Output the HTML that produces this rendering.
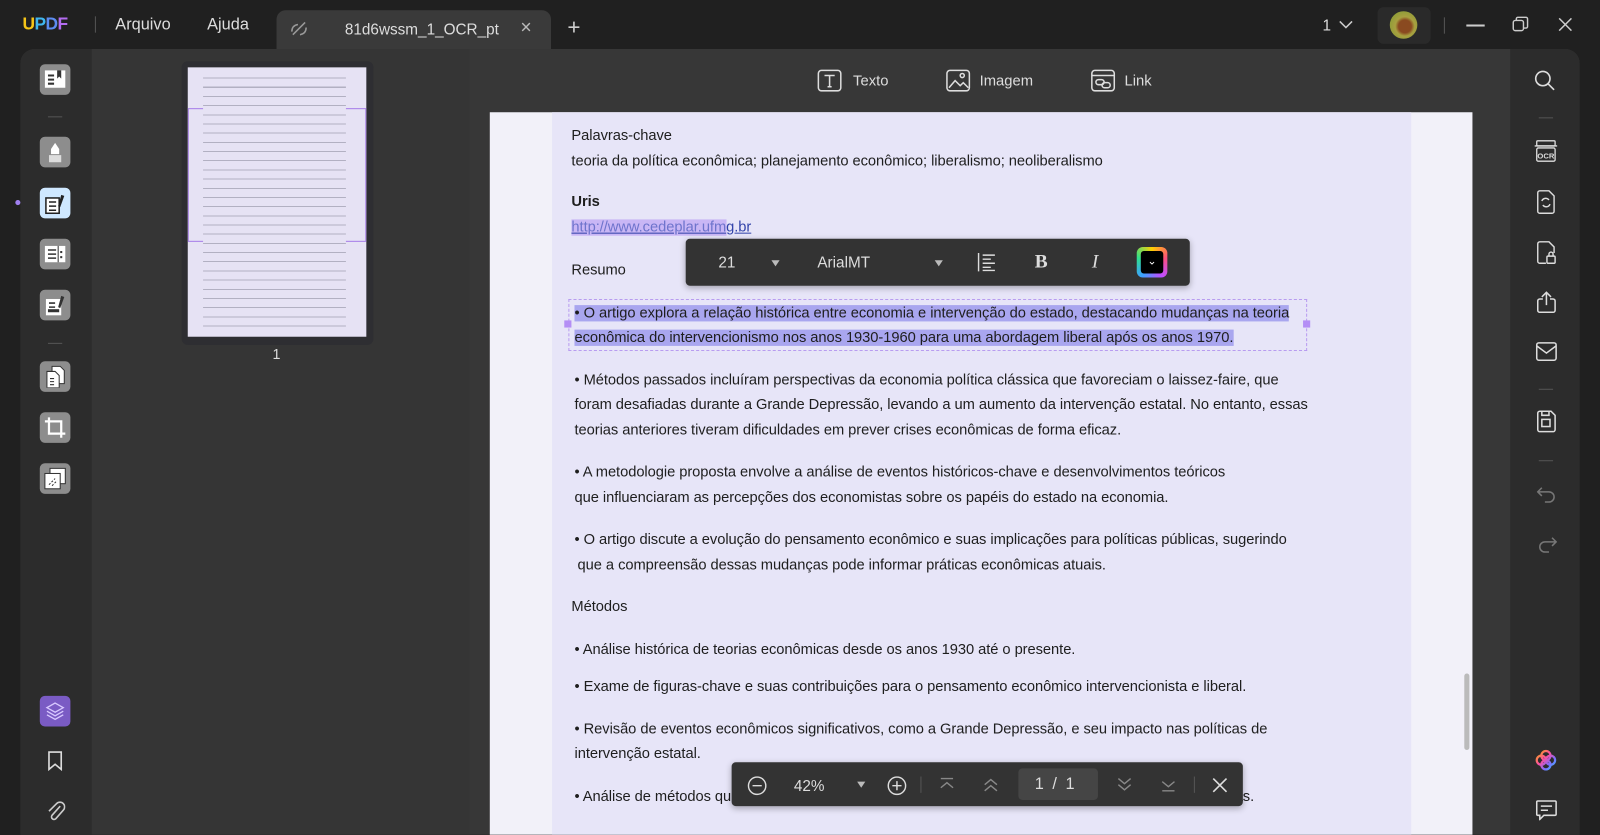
<!DOCTYPE html>
<html><head><meta charset="utf-8">
<style>
*{box-sizing:border-box;margin:0;padding:0}
html,body{width:1600px;height:835px;overflow:hidden;background:#202020;font-family:"Liberation Sans",sans-serif}
#s{position:absolute;left:0;top:0;width:1568px;height:818px;transform:scale(1.020408);transform-origin:0 0;background:#202020}
.a{position:absolute}
.ib{position:absolute;left:39px;width:30px;height:30px;border-radius:5px;background:#8d8d8d}
.ib svg{position:absolute;left:4px;top:4px}
.t{position:absolute;font-size:14.4px;color:#1e1e1e;white-space:nowrap;letter-spacing:-0.05px}
.w{color:#ddd}
.ri{position:absolute;left:1503px}
.sep{position:absolute;width:14px;height:1px;background:#555}
</style></head><body><div id="s">
<div class="a" style="left:22px;top:14px;font-weight:bold;font-size:17px;letter-spacing:-0.5px"><span style="color:#f5c518">U</span><span style="color:#3fb6f0">P</span><span style="color:#5c8cf0">D</span><span style="color:#b36cf0">F</span></div>
<div class="a" style="left:93px;top:16px;width:1px;height:16px;background:#555"></div>
<div class="a w" style="left:113px;top:16px;font-size:16px">Arquivo</div>
<div class="a w" style="left:203px;top:16px;font-size:16px">Ajuda</div>
<div class="a" style="left:271px;top:10px;width:269px;height:38px;background:#3a3a3a;border-radius:9px 9px 0 0"></div>
<svg class="a" style="left:283px;top:20px" width="20" height="18" viewBox="0 0 20 18" fill="none" stroke="#999" stroke-width="1.5"><path d="M4 14 L16 2 M3 11 Q3 5 9 4 M17 7 Q17 13 11 14"/></svg>
<div class="a w" style="left:338px;top:21px;font-size:15px">81d6wssm_1_OCR_pt</div>
<div class="a" style="left:510px;top:17px;font-size:19px;color:#bbb">×</div>
<div class="a" style="left:556px;top:14px;font-size:22px;color:#ccc;font-weight:300">+</div>
<div class="a w" style="left:1296px;top:17px;font-size:15px">1</div>
<svg class="a" style="left:1311px;top:19px" width="16" height="10"><path d="M2 2 L8 8 L14 2" stroke="#ccc" stroke-width="1.5" fill="none"/></svg>
<div class="a" style="left:1350px;top:7px;width:52px;height:36px;background:#2a2a2a;border-radius:6px"></div>
<div class="a" style="left:1362px;top:11px;width:27px;height:27px;border-radius:50%;background:radial-gradient(circle at 55% 55%,#8a4a20 0 30%,#a8a040 45%,#7a9a30 100%)"></div>
<div class="a" style="left:1415px;top:17px;width:1px;height:16px;background:#555"></div>
<div class="a" style="left:1437px;top:24px;width:18px;height:1.5px;background:#ccc"></div>
<svg class="a" style="left:1481px;top:15px" width="18" height="18" fill="none" stroke="#ccc" stroke-width="1.4"><rect x="2" y="5" width="10" height="10" rx="2"/><path d="M5 5V3.5a1.5 1.5 0 0 1 1.5-1.5H14.5A1.5 1.5 0 0 1 16 3.5V11a1.5 1.5 0 0 1-1.5 1.5H12"/></svg>
<svg class="a" style="left:1526px;top:16px" width="16" height="16" stroke="#ccc" stroke-width="1.5"><path d="M2 2L14 14M14 2L2 14"/></svg>
<div class="a" style="left:20px;top:48px;width:1528px;height:770px;background:#373737;border-radius:14px 14px 0 0;overflow:hidden">
 <div class="a" style="left:0;top:0;width:70px;height:770px;background:#2c2c2c"></div>
 <div class="a" style="left:70px;top:0;width:370px;height:770px;background:#353535"></div>
 <div class="a" style="left:1460px;top:0;width:68px;height:770px;background:#2c2c2c"></div>
</div>
<div class="ib" style="top:63px"><svg width="22" height="22" fill="none" stroke="#fff" stroke-width="2"><rect x="1" y="2" width="20" height="17" fill="#fff" stroke="none"/><path d="M4 7h6M4 11h6M4 15h6" stroke="#333"/><path d="M13 2v8l2-2 2 2V2" fill="#333" stroke="none"/></svg></div>
<div class="sep" style="left:47px;top:114px"></div>
<div class="ib" style="top:134px"><svg width="22" height="22"><path d="M11 2 L15 8 V13 H7 V8Z" fill="#fff"/><rect x="5" y="14" width="12" height="7" fill="#ddd"/></svg></div>
<div class="a" style="left:15px;top:196px;width:5px;height:5px;border-radius:50%;background:#a080f0"></div>
<div class="ib" style="top:184px;background:#cfe8ff"><svg width="22" height="22"><rect x="2" y="6" width="13" height="15" fill="#fff" stroke="#222" stroke-width="1.5"/><path d="M5 10h7M5 14h7M5 18h7" stroke="#222" stroke-width="1.5"/><path d="M17 3 L20 4 L16 15 L14 14Z" fill="#222"/></svg></div>
<div class="ib" style="top:234px"><svg width="22" height="22"><rect x="1" y="3" width="20" height="16" fill="#fff"/><path d="M4 7h8M4 11h8M4 15h8" stroke="#333" stroke-width="1.5"/><path d="M14 3v16" stroke="#333"/><rect x="16" y="8" width="2" height="2" fill="#333"/><rect x="16" y="13" width="2" height="2" fill="#333"/></svg></div>
<div class="ib" style="top:284px"><svg width="22" height="22"><rect x="2" y="5" width="15" height="16" fill="#fff"/><path d="M5 9h6M5 13h6" stroke="#333" stroke-width="1.5"/><rect x="4" y="15" width="11" height="3" fill="#333"/><path d="M17 2 L20 3 L16 14 L14 13Z" fill="#333"/></svg></div>
<div class="sep" style="left:47px;top:336px"></div>
<div class="ib" style="top:354px"><svg width="22" height="22"><path d="M8 1h8l4 4v13H8Z" fill="#fff" stroke="#333"/><path d="M3 6h8l4 4v12H3Z" fill="#fff" stroke="#333"/><path d="M6 13h4M6 16h4M6 19h4" stroke="#333"/></svg></div>
<div class="ib" style="top:404px"><svg width="22" height="22" fill="none" stroke="#fff" stroke-width="2.2"><path d="M5 1v16h16M1 5h16v16"/></svg></div>
<div class="ib" style="top:454px"><svg width="22" height="22"><rect x="6" y="1" width="15" height="15" fill="#fff" stroke="#333"/><rect x="1" y="6" width="15" height="15" fill="#fff" stroke="#333"/><path d="M5 17l6-6M8 18l5-5" stroke="#333" stroke-dasharray="2 1.5"/></svg></div>
<div class="ib" style="top:682px;background:#7a5bc4"><svg width="22" height="22" fill="none" stroke="#d8c8ff" stroke-width="1.3"><path d="M11 3 L19 7.5 L11 12 L3 7.5Z M3 11 L11 15.5 L19 11 M3 14.5 L11 19 L19 14.5"/></svg></div>
<svg class="a" style="left:46px;top:736px" width="16" height="20" fill="none" stroke="#ddd" stroke-width="1.6"><path d="M2 1h12v17l-6-5-6 5Z"/></svg>
<svg class="a" style="left:44px;top:784px" width="20" height="22" fill="none" stroke="#ccc" stroke-width="1.6"><path d="M15 6 L7 15 a2.5 2.5 0 0 0 3.5 3.5 L18 10 a4.5 4.5 0 0 0 -6.5 -6.5 L4 11"/></svg>
<div class="a" style="left:178px;top:60px;width:188px;height:278px;background:#2e2e32;border-radius:6px"></div>
<div class="a" style="left:184px;top:66px;width:175px;height:264px;background:#e6e2f4;overflow:hidden">
 <div class="a" style="left:0;top:40px;width:175px;height:131px;border:1px solid #a67ce8"></div>
 <div class="a" style="left:15px;top:6px;width:140px;height:250px;background:repeating-linear-gradient(#e6e2f4 0 4px,#b2b0c2 4px 5px,#e6e2f4 5px 9px)"></div>
</div>
<div class="a w" style="left:267px;top:339px;font-size:14px">1</div>
<svg class="a" style="left:801px;top:68px" width="24" height="22" fill="none" stroke="#ddd" stroke-width="1.5"><rect x="1" y="1" width="22" height="20" rx="3"/><path d="M7 6h10M12 6v11M10 17h4"/></svg>
<div class="a w" style="left:836px;top:72px;font-size:14.5px">Texto</div>
<svg class="a" style="left:927px;top:68px" width="24" height="22" fill="none" stroke="#ddd" stroke-width="1.5"><rect x="1" y="1" width="22" height="20" rx="3"/><path d="M3 18l6-7 5 5 3-3 5 5"/><circle cx="16" cy="6" r="2"/></svg>
<div class="a w" style="left:960px;top:72px;font-size:14.5px">Imagem</div>
<svg class="a" style="left:1069px;top:68px" width="24" height="22" fill="none" stroke="#ddd" stroke-width="1.5"><rect x="1" y="1" width="22" height="20" rx="3"/><path d="M1 6h22"/><rect x="5" y="10" width="8" height="5" rx="2.5"/><rect x="11" y="13" width="8" height="5" rx="2.5"/></svg>
<div class="a w" style="left:1102px;top:72px;font-size:14.5px">Link</div>
<svg class="ri" style="top:68px" width="22" height="22" fill="none" stroke="#ddd" stroke-width="1.6"><circle cx="9" cy="9" r="7"/><path d="M14 14l6 6"/></svg>
<div class="sep" style="left:1508px;top:115px;background:#555"></div>
<svg class="ri" style="top:136px" width="24" height="24" fill="none" stroke="#ddd" stroke-width="1.3"><rect x="3" y="2" width="18" height="5" rx="1"/><path d="M1 7h22"/><rect x="3" y="9" width="18" height="13" rx="1.5"/><text x="12" y="19.5" font-size="7.5" font-family="Liberation Sans" fill="#ddd" stroke="none" text-anchor="middle" font-weight="bold">OCR</text></svg>
<svg class="ri" style="left:1505px;top:186px" width="20" height="24" fill="none" stroke="#ddd" stroke-width="1.4"><path d="M2 3a2 2 0 0 1 2-2h9l5 5v15a2 2 0 0 1-2 2H4a2 2 0 0 1-2-2Z"/><path d="M6 11a4 4 0 0 1 7-1M14 14a4 4 0 0 1-7 1"/></svg>
<svg class="ri" style="left:1505px;top:236px" width="20" height="24" fill="none" stroke="#ddd" stroke-width="1.4"><path d="M10 22H4a2 2 0 0 1-2-2V3a2 2 0 0 1 2-2h9l5 5v6"/><rect x="11" y="15" width="8" height="7" rx="1"/><path d="M13 15v-2a2 2 0 0 1 4 0v2"/></svg>
<svg class="ri" style="left:1505px;top:285px" width="22" height="22" fill="none" stroke="#ddd" stroke-width="1.5"><path d="M7 8H4a2 2 0 0 0-2 2v9a2 2 0 0 0 2 2h13a2 2 0 0 0 2-2v-9a2 2 0 0 0-2-2h-3M10.5 14V2M6 6l4.5-4.5L15 6"/></svg>
<svg class="ri" style="left:1505px;top:335px" width="22" height="20" fill="none" stroke="#ddd" stroke-width="1.5"><rect x="1" y="1" width="19" height="17" rx="2"/><path d="M1 4l9.5 7L20 4"/></svg>
<div class="sep" style="left:1508px;top:381px"></div>
<svg class="ri" style="left:1506px;top:402px" width="20" height="22" fill="none" stroke="#ddd" stroke-width="1.5"><path d="M1 3a2 2 0 0 1 2-2h11l4 4v14a2 2 0 0 1-2 2H3a2 2 0 0 1-2-2Z"/><rect x="5" y="9" width="8" height="7"/><path d="M5 1v4h7V1"/></svg>
<div class="sep" style="left:1508px;top:451px"></div>
<svg class="ri" style="left:1506px;top:475px" width="20" height="18" fill="none" stroke="#777" stroke-width="1.5"><path d="M5 3L1 7l4 4M1 7h11a5 5 0 0 1 0 10H8"/></svg>
<svg class="ri" style="left:1506px;top:524px" width="20" height="18" fill="none" stroke="#777" stroke-width="1.5"><path d="M15 3l4 4-4 4M19 7H8a5 5 0 0 0 0 10h4"/></svg>
<svg class="ri" style="left:1504px;top:734px" width="22" height="22" fill="none" stroke-width="2.2"><path d="M11 2a4.5 4.5 0 0 1 0 9a4.5 4.5 0 0 1 0-9Z M2 11a4.5 4.5 0 0 1 9 0a4.5 4.5 0 0 1-9 0Z M11 11a4.5 4.5 0 0 1 9 0a4.5 4.5 0 0 1-9 0Z M11 11a4.5 4.5 0 0 1 0 9a4.5 4.5 0 0 1 0-9Z" stroke="url(#g)"/><defs><linearGradient id="g" x1="0" y1="0" x2="1" y2="1"><stop offset="0" stop-color="#f5b100"/><stop offset=".4" stop-color="#ff4fa0"/><stop offset=".7" stop-color="#7b6cff"/><stop offset="1" stop-color="#2fd0ff"/></linearGradient></defs></svg>
<svg class="ri" style="left:1505px;top:784px" width="22" height="20" fill="none" stroke="#ddd" stroke-width="1.5"><path d="M1 2a1 1 0 0 1 1-1h17a1 1 0 0 1 1 1v12a1 1 0 0 1-1 1H8l-4 4v-4H2a1 1 0 0 1-1-1Z M5 6h11M5 10h7"/></svg>
<div class="a" style="left:480px;top:110px;width:963px;height:708px;background:#f2f1f9"></div>
<div class="a" style="left:541px;top:110px;width:842px;height:708px;background:#e7e5f8"></div>
<div class="a" style="left:1435px;top:660px;width:5px;height:75px;background:#bbb;border-radius:3px"></div>
<div class="t" style="left:560px;top:125px">Palavras-chave</div>
<div class="t" style="left:560px;top:150px">teoria da política econômica; planejamento econômico; liberalismo; neoliberalismo</div>
<div class="t" style="left:560px;top:190px;font-weight:bold">Uris</div>
<div class="t" style="left:560px;top:215px;color:#3344aa;text-decoration:underline"><span style="background:#c9b6f5;color:#6e74cc">http://www.cedeplar.ufm</span>g.br</div>
<div class="t" style="left:560px;top:257px">Resumo</div>
<div class="a" style="left:557px;top:293px;width:724px;height:51px;border:1px dashed #b89cf0"></div>
<div class="a" style="left:553px;top:314px;width:7px;height:7px;background:#b48ef5"></div>
<div class="a" style="left:1277px;top:314px;width:7px;height:7px;background:#b48ef5"></div>
<div class="t" style="left:563px;top:299px"><span style="background:#a9a6ef">• O artigo explora a relação histórica entre economia e intervenção do estado, destacando mudanças na teoria</span></div>
<div class="t" style="left:563px;top:323px"><span style="background:#a9a6ef">econômica do intervencionismo nos anos 1930-1960 para uma abordagem liberal após os anos 1970.</span></div>
<div class="t" style="left:563px;top:365px">• Métodos passados incluíram perspectivas da economia política clássica que favoreciam o laissez-faire, que</div>
<div class="t" style="left:563px;top:389px">foram desafiadas durante a Grande Depressão, levando a um aumento da intervenção estatal. No entanto, essas</div>
<div class="t" style="left:563px;top:414px">teorias anteriores tiveram dificuldades em prever crises econômicas de forma eficaz.</div>
<div class="t" style="left:563px;top:455px">• A metodologie proposta envolve a análise de eventos históricos-chave e desenvolvimentos teóricos</div>
<div class="t" style="left:563px;top:480px">que influenciaram as percepções dos economistas sobre os papéis do estado na economia.</div>
<div class="t" style="left:563px;top:521px">• O artigo discute a evolução do pensamento econômico e suas implicações para políticas públicas, sugerindo</div>
<div class="t" style="left:566px;top:546px">que a compreensão dessas mudanças pode informar práticas econômicas atuais.</div>
<div class="t" style="left:560px;top:587px">Métodos</div>
<div class="t" style="left:563px;top:629px">• Análise histórica de teorias econômicas desde os anos 1930 até o presente.</div>
<div class="t" style="left:563px;top:665px">• Exame de figuras-chave e suas contribuições para o pensamento econômico intervencionista e liberal.</div>
<div class="t" style="left:563px;top:707px">• Revisão de eventos econômicos significativos, como a Grande Depressão, e seu impacto nas políticas de</div>
<div class="t" style="left:563px;top:731px">intervenção estatal.</div>
<div class="t" style="left:563px;top:773px">• Análise de métodos qu</div>
<div class="t" style="left:1210px;top:773px">as.</div>
<div class="a" style="left:672px;top:234px;width:494px;height:46px;background:#333;border-radius:4px;box-shadow:0 2px 6px rgba(0,0,0,.3)"></div>
<div class="a w" style="left:704px;top:249px;font-size:15px">21</div>
<div class="a" style="left:756px;top:255px;border:4.5px solid transparent;border-top:6px solid #bbb"></div>
<div class="a w" style="left:801px;top:249px;font-size:15px">ArialMT</div>
<div class="a" style="left:916px;top:255px;border:4.5px solid transparent;border-top:6px solid #bbb"></div>
<svg class="a" style="left:957px;top:247px" width="20" height="20" stroke="#ddd" stroke-width="1.4"><path d="M2 1v18M6 3h12M6 7h8M6 11h12M6 15h8M6 18h12"/></svg>
<div class="a w" style="left:1014px;top:246px;font-size:19px;font-family:'Liberation Serif',serif;font-weight:bold">B</div>
<div class="a w" style="left:1070px;top:246px;font-size:19px;font-family:'Liberation Serif',serif;font-style:italic">I</div>
<div class="a" style="left:1114px;top:242px;width:30px;height:30px;border-radius:6px;background:conic-gradient(#ffce00,#ff4f7b,#c04dff,#3ca0ff,#2fe08a,#ffce00);padding:4px"><div style="width:22px;height:22px;background:#000;border-radius:3px;color:#fff;font-size:11px;text-align:center;line-height:20px">⌄</div></div>
<div class="a" style="left:717px;top:747px;width:501px;height:43px;background:#333;border-radius:4px;box-shadow:0 2px 6px rgba(0,0,0,.3)"></div>
<svg class="a" style="left:732px;top:760px" width="20" height="20" fill="none" stroke="#ddd" stroke-width="1.4"><circle cx="10" cy="10" r="8.5"/><path d="M5.5 10h9"/></svg>
<div class="a w" style="left:778px;top:762px;font-size:15px">42%</div>
<div class="a" style="left:840px;top:766px;border:4.5px solid transparent;border-top:6px solid #bbb"></div>
<svg class="a" style="left:869px;top:760px" width="20" height="20" fill="none" stroke="#ddd" stroke-width="1.4"><circle cx="10" cy="10" r="8.5"/><path d="M5.5 10h9M10 5.5v9"/></svg>
<div class="a" style="left:902px;top:761px;width:1px;height:16px;background:#555"></div>
<svg class="a" style="left:919px;top:760px" width="18" height="18" fill="none" stroke="#888" stroke-width="1.4"><path d="M3 3h12M3 12l6-5 6 5"/></svg>
<svg class="a" style="left:962px;top:760px" width="18" height="18" fill="none" stroke="#888" stroke-width="1.4"><path d="M3 9l6-5 6 5M3 15l6-5 6 5"/></svg>
<div class="a" style="left:998px;top:753px;width:78px;height:31px;background:#454545;border-radius:4px"></div>
<div class="a w" style="left:1014px;top:760px;font-size:16px;word-spacing:4px">1 / 1</div>
<svg class="a" style="left:1093px;top:760px" width="18" height="18" fill="none" stroke="#888" stroke-width="1.4"><path d="M3 3l6 5 6-5M3 9l6 5 6-5"/></svg>
<svg class="a" style="left:1136px;top:760px" width="18" height="18" fill="none" stroke="#888" stroke-width="1.4"><path d="M3 6l6 5 6-5M3 15h12"/></svg>
<div class="a" style="left:1170px;top:761px;width:1px;height:16px;background:#555"></div>
<svg class="a" style="left:1187px;top:761px" width="17" height="17" stroke="#ddd" stroke-width="1.6"><path d="M2 2l13 13M15 2L2 15"/></svg>
</div></body></html>
